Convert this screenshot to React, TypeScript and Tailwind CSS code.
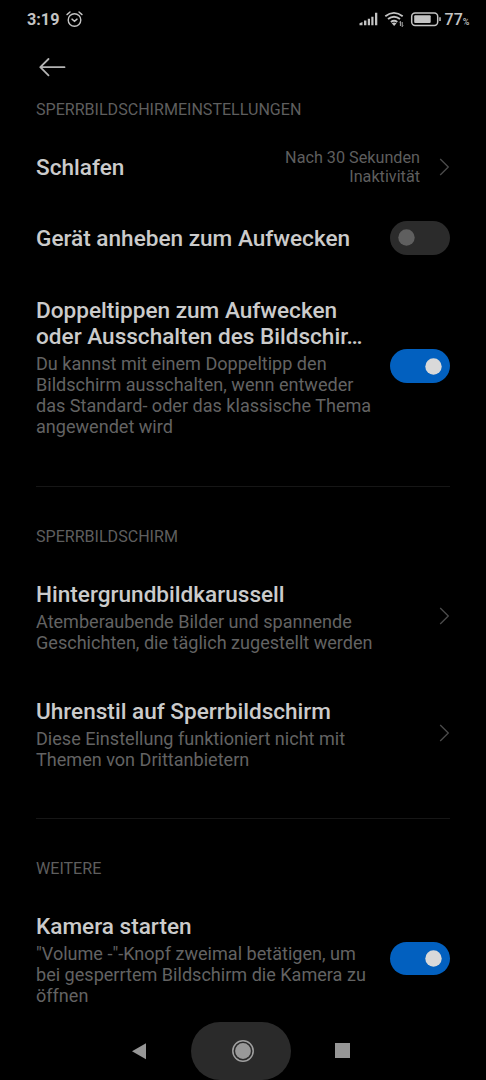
import type { ReactNode } from "react";

function SectionLabel({ children }: { children: ReactNode }) {
  return (
    <h2 className="text-[16.07px] leading-[19px] whitespace-nowrap text-[#5e5e5e]">{children}</h2>
  );
}

function Chevron() {
  return (
    <svg className="h-[18px] w-[11px] shrink-0" viewBox="0 0 11 18" fill="none">
      <path d="M1.2 1 9.3 9 1.2 17" stroke="#4c4c4c" strokeWidth="1.3" />
    </svg>
  );
}

function Toggle({ on = false }: { on?: boolean }) {
  return (
    <button
      role="switch"
      aria-checked={on}
      className={
        on
          ? "flex h-[33.5px] w-[60.5px] shrink-0 items-center justify-end rounded-full bg-[#0260bf] pr-[8.5px]"
          : "flex h-[33.5px] w-[60.5px] shrink-0 items-center justify-start rounded-full bg-[#2b2b2b] pl-[8.5px]"
      }
    >
      <svg className="size-[17px]" viewBox="0 0 17 17">
        <circle cx="8.5" cy="8.5" r="8.2" fill={on ? "#d9d9d9" : "#5f5f5f"} />
      </svg>
    </button>
  );
}

function Row({ title, description, children }: { title: string[]; description?: string[]; children: ReactNode }) {
  return (
    <div className="flex items-center justify-between">
      <div className="flex flex-col gap-[3px] whitespace-nowrap">
        <div
          className={
            description
              ? "pt-[1px] text-[22.58px] leading-[26px] font-medium text-[#cbcbcb]"
              : "pt-[2px] text-[22.58px] leading-[26px] font-medium text-[#cbcbcb]"
          }
        >
          {title.map((line) => (
            <p key={line}>{line}</p>
          ))}
        </div>
        {description && (
          <div className="text-[18.07px] leading-[21px] text-[#636363]">
            {description.map((line) => (
              <p key={line}>{line}</p>
            ))}
          </div>
        )}
      </div>
      <div className={description ? "mb-[2px] flex shrink-0" : "flex shrink-0"}>{children}</div>
    </div>
  );
}

function StatusBar() {
  return (
    <header className="flex h-[38px] items-center justify-between pr-[16px] pl-[27px] text-[#c4c4c4]">
      <div className="flex items-center gap-[7px]">
        <span className="text-[16.2px] leading-[19px] font-bold">3:19</span>
        <svg className="h-[17px] w-[17px]" viewBox="0 0 17 17" fill="none" stroke="currentColor" strokeWidth="1.4" strokeLinecap="round">
          <circle cx="8.5" cy="9" r="6.3" />
          <path d="M1 3.6 4 1M16 3.6 13 1M6 8.1l2.5 2.2L11 8.1" />
        </svg>
      </div>
      <div className="flex items-center">
        <svg className="h-[20px] w-[82px]" viewBox="359 9 82 20" fill="none">
          <path d="M359.5 25v-2l3-1.2V25zM364 25v-4.7h2.4V25zM367.8 25v-6.5h2.2V25zM371.3 25v-8.5h2.2V25zM375 25V12.5h2.3V25z" fill="currentColor" transform="translate(0 .3)" />
          <g stroke="currentColor" strokeWidth="1.9">
            <path d="M385.3 16.2q8.6-6.6 17.4 0" />
            <path d="M388 19.1q6-4.7 12 0" />
            <path d="M390.9 21.9q3.2-2.4 6.4 0" />
          </g>
          <path d="m391.7 23.3 2.4 2.6 2.4-2.6q-2.4-1.4-4.8 0" fill="currentColor" />
          <path d="M400.4 26v-4.6l-1 1M402.2 22v4.6l1-1" stroke="currentColor" strokeWidth=".9" />
          <rect x="411.7" y="13" width="26" height="12.4" rx="3.4" stroke="currentColor" strokeWidth="1.5" />
          <rect x="414.2" y="15.3" width="16.5" height="7.8" rx="1" fill="currentColor" />
          <path d="M440 17.3v3.6" stroke="currentColor" strokeWidth="1.5" />
        </svg>
        <div className="flex w-[29px] items-baseline justify-center pl-[3px]">
          <span className="text-[16px] leading-[19px] font-medium">77</span>
          <span className="text-[9px] leading-none font-medium">%</span>
        </div>
      </div>
    </header>
  );
}

function NavigationBar() {
  return (
    <nav className="flex h-[58px] items-center bg-black">
      <button className="flex w-[191px] justify-end pr-[44px]" aria-label="Zurück">
        <svg className="h-[17px] w-[15px]" viewBox="0 0 15 17">
          <path d="M0 8.2 14 .2v16z" fill="#969696" />
        </svg>
      </button>
      <button className="flex h-[58px] w-[100px] items-center justify-center rounded-[29px] bg-[#2a2a2a] pl-[3px]" aria-label="Startseite">
        <svg className="size-[24px]" viewBox="0 0 24 24">
          <circle cx="12" cy="12" r="10.2" fill="none" stroke="#a0a0a0" strokeWidth="1.5" />
          <circle cx="12" cy="12" r="7.9" fill="#999" />
        </svg>
      </button>
      <button className="pb-[1px] pl-[44px]" aria-label="Übersicht">
        <span className="block size-[15px] bg-[#969696]" />
      </button>
    </nav>
  );
}

export default function App() {
  return (
    <div className="flex h-[1080px] w-[486px] flex-col overflow-hidden bg-black font-['Roboto',sans-serif]">
      <StatusBar />
      <div className="flex h-[61px] items-center pl-[38px]">
        <svg className="mb-[3px] h-[20px] w-[28px]" viewBox="0 0 28 20" fill="none" stroke="#b4b4b4" strokeWidth="1.8" strokeLinecap="round" strokeLinejoin="round">
          <path d="M10.5 2 2.3 10.2l8.2 8.2M2.3 10.2H26.5" />
        </svg>
      </div>
      <main className="flex flex-1 flex-col px-[36px]">
        <section className="flex h-[388px] shrink-0 flex-col border-b border-[#161616] pt-[1px]">
          <SectionLabel>SPERRBILDSCHIRMEINSTELLUNGEN</SectionLabel>
          <div className="mt-[28px] flex flex-col">
            <Row title={["Schlafen"]}>
              <div className="flex items-center gap-[19px]">
                <p className="pt-[1px] text-right text-[16.2px] leading-[19px] text-[#5e5e5e]">
                  Nach 30 Sekunden
                  <br />
                  Inaktivität
                </p>
                <Chevron />
              </div>
            </Row>
            <div className="mt-[35px]">
              <Row title={["Gerät anheben zum Aufwecken"]}>
                <Toggle />
              </Row>
            </div>
            <div className="mt-[42.5px]">
              <Row
                title={["Doppeltippen zum Aufwecken", "oder Ausschalten des Bildschir…"]}
                description={[
                  "Du kannst mit einem Doppeltipp den",
                  "Bildschirm ausschalten, wenn entweder",
                  "das Standard- oder das klassische Thema",
                  "angewendet wird",
                ]}
              >
                <Toggle on />
              </Row>
            </div>
          </div>
        </section>
        <section className="flex h-[332px] shrink-0 flex-col border-b border-[#161616] pt-[40px]">
          <SectionLabel>SPERRBILDSCHIRM</SectionLabel>
          <div className="mt-[35px] flex flex-col gap-[45px]">
            <Row title={["Hintergrundbildkarussell"]} description={["Atemberaubende Bilder und spannende", "Geschichten, die täglich zugestellt werden"]}>
              <Chevron />
            </Row>
            <Row title={["Uhrenstil auf Sperrbildschirm"]} description={["Diese Einstellung funktioniert nicht mit", "Themen von Drittanbietern"]}>
              <Chevron />
            </Row>
          </div>
        </section>
        <section className="flex flex-col pt-[40px]">
          <SectionLabel>WEITERE</SectionLabel>
          <div className="mt-[35px]">
            <Row title={["Kamera starten"]} description={["\"Volume -\"-Knopf zweimal betätigen, um", "bei gesperrtem Bildschirm die Kamera zu", "öffnen"]}>
              <Toggle on />
            </Row>
          </div>
        </section>
      </main>
      <NavigationBar />
    </div>
  );
}
